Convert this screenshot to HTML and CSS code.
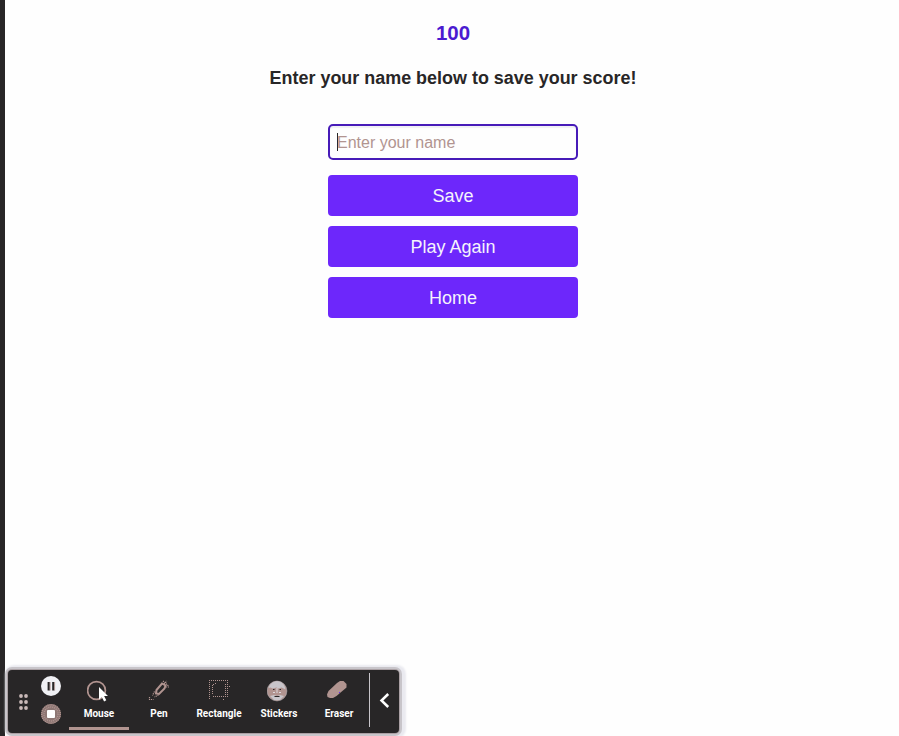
FILE: index.html
```html
<!DOCTYPE html>
<html lang="en">
<head>
<meta charset="utf-8">
<title>Save your score</title>
<link rel="stylesheet" href="styles.css">
</head>
<body>
<main class="page">
  <h1 class="score">100</h1>
  <h2 class="prompt">Enter your name below to save your score!</h2>
  <div class="form">
    <div class="field"><span class="caret"></span><span class="hint">Enter your name</span></div>
    <button class="btn">Save</button>
    <button class="btn">Play Again</button>
    <button class="btn">Home</button>
  </div>
</main>
<div class="toolbar">
  <svg class="grip" width="10" height="18" viewBox="0 0 10 18" fill="#c9b9b8"><circle cx="2" cy="3" r="1.900"/><circle cx="7" cy="3" r="1.900"/><circle cx="2" cy="9" r="1.900"/><circle cx="7" cy="9" r="1.900"/><circle cx="2" cy="15" r="1.900"/><circle cx="7" cy="15" r="1.900"/></svg>
  <div class="controls">
    <svg width="20" height="20" viewBox="0 0 20 20"><circle cx="10" cy="10" r="10" fill="#f0f0f4"/><path d="M7.700 6v8.500M12.300 6v8.500" stroke="#282627" stroke-width="2.200"/><path d="M9.200 6v8.500M13.600 6v8.500" stroke="#b19490" stroke-width=".8"/></svg>
    <svg width="20" height="20" viewBox="0 0 20 20"><circle cx="10" cy="10" r="10" fill="#8d7774"/><circle cx="10" cy="10" r="9.300" fill="none" stroke="#b19490" stroke-width="1.400" stroke-dasharray="1 1"/><circle cx="10" cy="10" r="7" fill="none" stroke="#b19490" stroke-width="1.400" stroke-dasharray="1 1"/><rect x="6" y="6" width="8" height="8" rx="1" fill="#fff"/></svg>
  </div>
  <div class="tool active">
    <svg width="24" height="24" viewBox="0 0 24 24"><circle cx="9.500" cy="11.500" r="8.900" fill="none" stroke="#b19490" stroke-width="1.700"/><path d="M12 8v12.500l2.800-2.500 2.300 4.500 2.200-1.200-2.200-4.300h3.900z" fill="#fff"/></svg>
    <span>Mouse</span>
  </div>
  <div class="tool">
    <svg width="24" height="24" viewBox="0 0 24 24" fill="none" stroke="#b19490"><path d="M9 14.500L9.500 11 15 4.500 18.500 6.500 17.500 9.500 12 15z" stroke-width="2"/><path d="M7.500 12.500l-2 4M11.500 16l-4 2M16 2l5.500 5M17 5l3-3M19 8h3M2.500 18v2.500h4" stroke-width="1.200" stroke-dasharray="1.200 .8"/></svg>
    <span>Pen</span>
  </div>
  <div class="tool">
    <svg width="24" height="24" viewBox="0 0 24 24" fill="none" stroke="#b19490" stroke-dasharray="1 1"><path d="M2 1.500h19M2.500 3v18M20.500 3v16M6 17.500h13M5.500 6v10M18.500 5v12M6 5.500h1M8 4.500h1M22 7.500h1M16 20.500h1" stroke-width="1"/></svg>
    <span>Rectangle</span>
  </div>
  <div class="tool">
    <svg width="24" height="24" viewBox="0 0 24 24"><circle cx="10" cy="12" r="9.900" fill="#b19490" stroke="#c8c5ca" stroke-width=".5"/><path d="M1.500 9C3 4 8 1.500 12 2.500c4 1 6 4 6.500 8l-4-2-3 1-2-1-4 1-2-1zM3 17l4-1 3 1 3-1 4 1-4 4H7z" fill="#c8c5ca"/><path d="M6 10.500h1.500M12.500 10.500h1.500M7.500 17.500h5" stroke="#282627"/><path d="M10 9v5M6 13.500h2M12 13.500h2" stroke="#ddd8dc"/></svg>
    <span>Stickers</span>
  </div>
  <div class="tool">
    <svg width="24" height="24" viewBox="0 0 24 24"><path d="M0 15.500L1.500 12 10 4l3-2h3.500L19.500 5v3.500L9.500 17 6 19H3L.5 18z" fill="#b19490"/><path d="M12 13.500h1" stroke="#671ffd"/></svg>
    <span>Eraser</span>
  </div>
  <div class="divider"></div>
  <svg class="collapse" width="12" height="16" viewBox="0 0 12 16" fill="none" stroke="#fff" stroke-width="2.500"><path d="M9.200 1L2.500 7.500l6.700 6.500"/></svg>
</div>
</body>
</html>
```
FILE: styles.css
```css
* { box-sizing: border-box; }
body {
  margin: 0;
  height: 736px;
  overflow: hidden;
  background: #fefefe;
  border-left: 5px solid #282627;
  font-family: "Liberation Sans", Arial, sans-serif;
}
.page {
  display: flex;
  flex-direction: column;
  align-items: center;
  margin-left: 2px;
  padding-top: 21px;
}
.score {
  margin: 0;
  font-size: 20.5px;
  line-height: 24px;
  color: #4b1bd0;
}
.prompt {
  margin: 23px 0 35px;
  font-size: 17.95px;
  line-height: 21px;
  color: #282627;
  white-space: nowrap;
}
.form {
  display: flex;
  flex-direction: column;
  gap: 10px;
  width: 250px;
}
.field {
  display: flex;
  align-items: center;
  height: 36px;
  margin-bottom: 5px;
  padding-left: 7px;
  border: 2px solid #471bb8;
  border-radius: 5px;
  box-shadow: inset 0 2px 1px #f0f0f4;
  font-size: 16px;
  color: #b19490;
}
.hint { padding-top: 2px; }
.caret {
  width: 1px;
  height: 18px;
  margin-right: -1px;
  background: #282627;
}
.btn {
  height: 41px;
  padding: 2px 0 0;
  border: 0;
  border-radius: 4px;
  background: #6d27fb;
  color: #f5f3fb;
  font: 18px "Liberation Sans", Arial, sans-serif;
}
.toolbar {
  position: absolute;
  left: 8px;
  top: 670px;
  display: flex;
  width: 391px;
  height: 63px;
  border-radius: 4px;
  background: #282627;
  box-shadow: 0 0 0 1px #aaa0a4, 0 0 0 3px #c8c5ca, 2px 0 2px 5px #eaeaf0;
}
.grip { margin: 23px 0 0 11px; }
.controls {
  display: flex;
  flex-direction: column;
  gap: 8px;
  margin: 6px 0 0 12px;
}
.controls svg { display: block; }
.tool {
  display: flex;
  flex-direction: column;
  align-items: center;
  width: 60px;
  padding-top: 9px;
  color: #fff;
  font: 700 10px/14px Roboto, sans-serif;
}
.controls + .tool { margin-left: 8px; }
.tool span { margin-top: 4px; }
.active { height: 60px; border-bottom: 3px solid #b19490; }
.divider {
  width: 1px;
  height: 54px;
  margin-top: 3px;
  background: #c8c5ca;
}
.collapse { margin: 23px 0 0 9px; }
```
